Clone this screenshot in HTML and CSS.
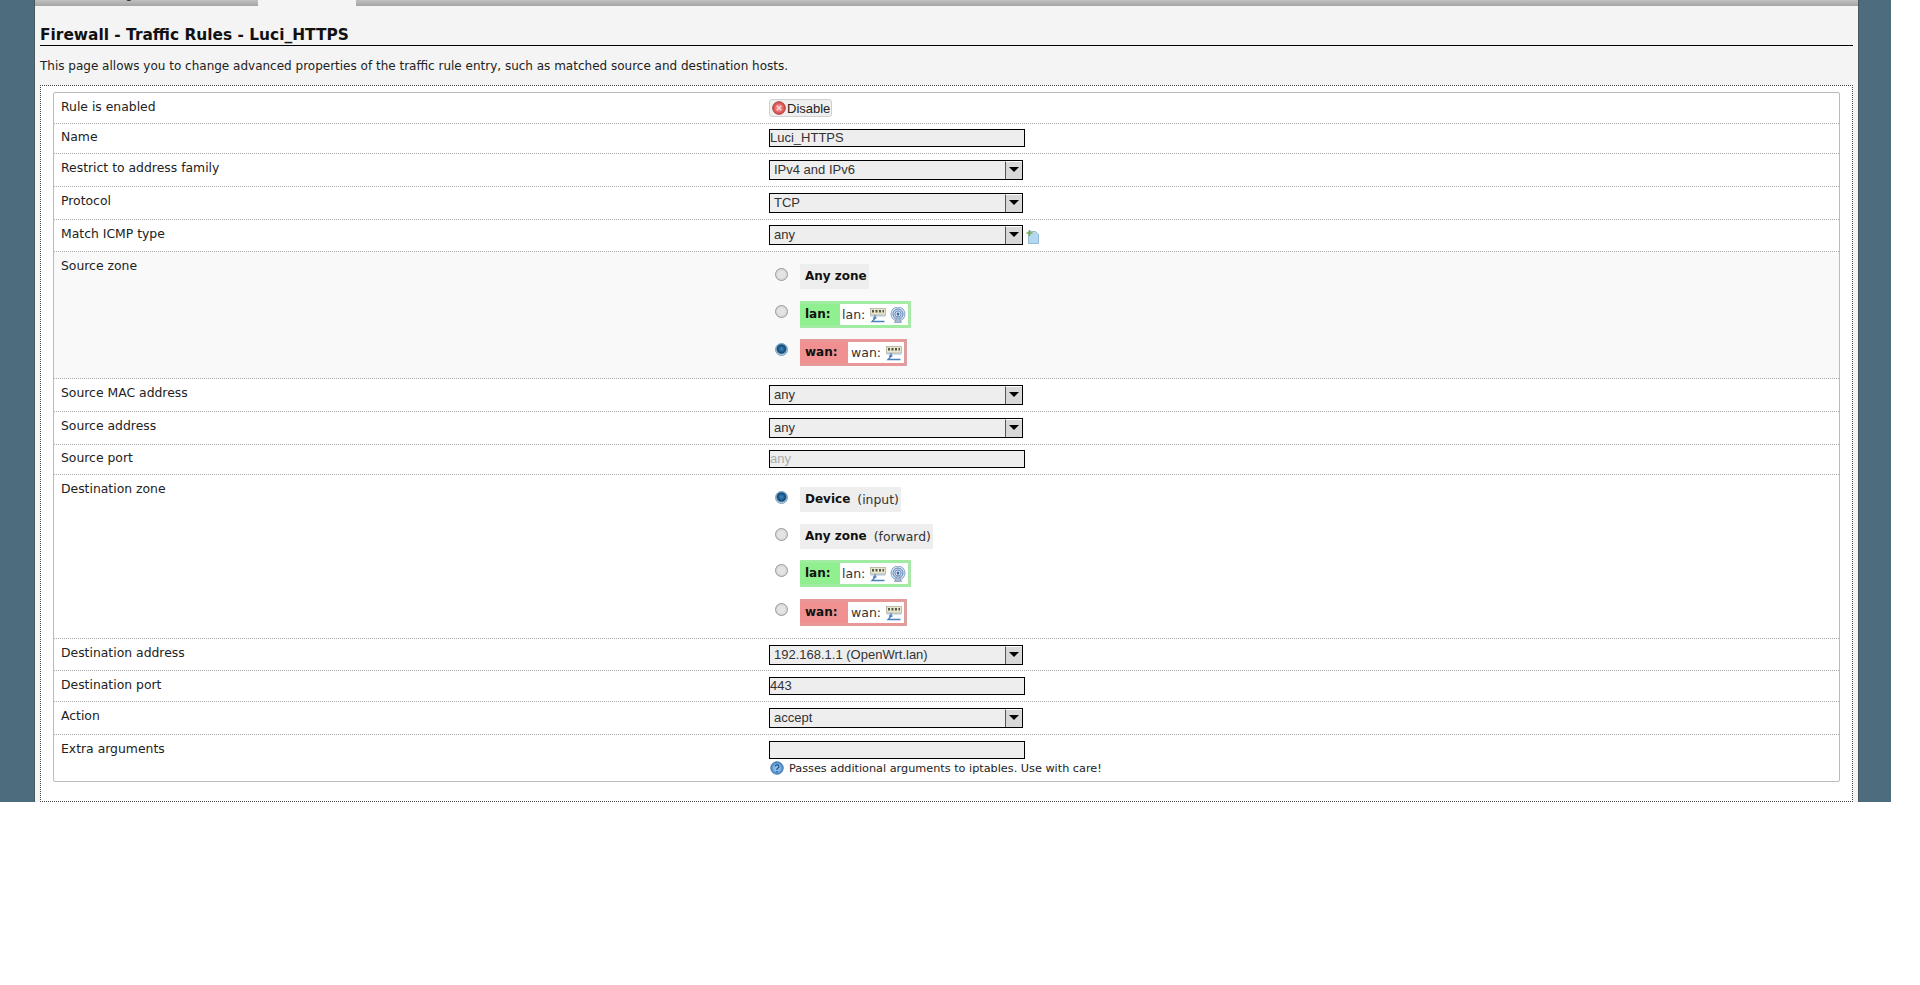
FILE: index.html
```html
<!DOCTYPE html>
<html lang="en">
<head>
<meta charset="utf-8">
<title>Firewall - Traffic Rules - Luci_HTTPS</title>
<link rel="stylesheet" href="styles.css">
</head>
<body>
<svg class="defs" width="0" height="0" aria-hidden="true">
  <defs>
    <symbol id="sw" viewBox="0 0 16 16">
      <rect x="0.5" y="1.500" width="15" height="6.500" fill="#e8e6cc" stroke="#a8a890" stroke-width="0.700"/>
      <path d="M2 3h2v2.500H2zM5.500 3h2v2.500h-2zM9 3h2v2.500H9zM12.500 3h1.500v2.500h-1.500z" fill="#55554a"/>
      <rect x="0.5" y="8" width="15" height="1.600" fill="#bccad8"/>
      <path d="M5 8v3.500L2 14.500h12.500M3 11h3.500" fill="none" stroke="#4a80bc" stroke-width="1.300"/>
    </symbol>
    <symbol id="wl" viewBox="0 0 16 16">
      <circle cx="8" cy="7" r="7" fill="#dce6f2" stroke="#7f9fc8"/>
      <circle cx="8" cy="7" r="5" fill="#c4d4ea" stroke="#5f86bc"/>
      <circle cx="8" cy="7" r="3" fill="#e4ecf6" stroke="#6f90c0"/>
      <circle cx="8" cy="7" r="1.400" fill="#3f68a8"/>
      <path d="M8 8L4.500 15.500h7z" fill="#a8b8d0" stroke="#6f88b0" stroke-width="0.600"/>
    </symbol>
  </defs>
</svg>
<div class="page">
  <div class="panel">
    <div class="tabs">
      <div class="tab tab-off tab-first"><span class="tab-text">General Settings</span></div>
      <div class="tab tab-on"></div>
      <div class="tab tab-off tab-last"></div>
    </div>
    <div class="head">
      <h2 class="title">Firewall - Traffic Rules - Luci_HTTPS</h2>
      <p class="desc">This page allows you to change advanced properties of the traffic rule entry, such as matched source and destination hosts.</p>
    </div>
    <div class="fieldset">
      <div class="box">
        <div class="row">
          <div class="label">Rule is enabled</div>
          <div class="field">
            <div class="btn">
              <svg class="btn-icon" viewBox="0 0 14 14" width="14" height="14"><circle cx="7" cy="7" r="6.300" fill="#e05a5a" stroke="#a83a3a"/><circle cx="7" cy="7" r="3.800" fill="#ec8080"/><path d="M4.800 4.800l4.400 4.400M9.200 4.800l-4.400 4.400" stroke="#f6d8d8" stroke-width="1.300"/></svg>
              <span>Disable</span>
            </div>
          </div>
        </div>
        <div class="row row-name">
          <div class="label">Name</div>
          <div class="field"><div class="input">Luci_HTTPS</div></div>
        </div>
        <div class="row">
          <div class="label">Restrict to address family</div>
          <div class="field"><div class="select"><span class="select-text">IPv4 and IPv6</span><span class="arrow"></span></div></div>
        </div>
        <div class="row">
          <div class="label">Protocol</div>
          <div class="field"><div class="select"><span class="select-text">TCP</span><span class="arrow"></span></div></div>
        </div>
        <div class="row row-name">
          <div class="label label-match">Match ICMP type</div>
          <div class="field field-inline">
            <div class="select"><span class="select-text">any</span><span class="arrow"></span></div>
            <svg class="add-icon" viewBox="0 0 14 14" width="14" height="14"><path d="M2.500 1.500h7l3 3v9h-10z" fill="#b4d8ee" stroke="#7fb0d0" stroke-width="0.800"/><path d="M3.500 0v6M0.500 3h6" stroke="#7fa84a" stroke-width="1.600"/></svg>
          </div>
        </div>
        <div class="row row-zone row-shade">
          <div class="label label-zone">Source zone</div>
          <div class="field zones">
            <div class="zone-line"><span class="radio"></span><div class="zone zone-any"><b>Any zone</b></div></div>
            <div class="zone-line"><span class="radio"></span><div class="zone zone-lan"><b>lan:</b><span class="zone-inner">lan: <svg class="net"><use href="#sw"/></svg><svg class="net net-wl"><use href="#wl"/></svg></span></div></div>
            <div class="zone-line zone-line-close"><span class="radio radio-on"></span><div class="zone zone-wan"><b>wan:</b><span class="zone-inner">wan: <svg class="net"><use href="#sw"/></svg></span></div></div>
          </div>
        </div>
        <div class="row">
          <div class="label">Source MAC address</div>
          <div class="field"><div class="select"><span class="select-text">any</span><span class="arrow"></span></div></div>
        </div>
        <div class="row">
          <div class="label">Source address</div>
          <div class="field"><div class="select"><span class="select-text">any</span><span class="arrow"></span></div></div>
        </div>
        <div class="row row-name">
          <div class="label">Source port</div>
          <div class="field"><div class="input input-placeholder">any</div></div>
        </div>
        <div class="row row-zone">
          <div class="label label-zone">Destination zone</div>
          <div class="field zones">
            <div class="zone-line"><span class="radio radio-on"></span><div class="zone zone-any"><b>Device</b><span class="zone-note">(input)</span></div></div>
            <div class="zone-line"><span class="radio"></span><div class="zone zone-any"><b>Any zone</b><span class="zone-note">(forward)</span></div></div>
            <div class="zone-line zone-line-close"><span class="radio"></span><div class="zone zone-lan"><b>lan:</b><span class="zone-inner">lan: <svg class="net"><use href="#sw"/></svg><svg class="net net-wl"><use href="#wl"/></svg></span></div></div>
            <div class="zone-line"><span class="radio"></span><div class="zone zone-wan"><b>wan:</b><span class="zone-inner">wan: <svg class="net"><use href="#sw"/></svg></span></div></div>
          </div>
        </div>
        <div class="row row-bottom-tight">
          <div class="label">Destination address</div>
          <div class="field"><div class="select"><span class="select-text">192.168.1.1 (OpenWrt.lan)</span><span class="arrow"></span></div></div>
        </div>
        <div class="row">
          <div class="label">Destination port</div>
          <div class="field"><div class="input">443</div></div>
        </div>
        <div class="row">
          <div class="label">Action</div>
          <div class="field"><div class="select"><span class="select-text">accept</span><span class="arrow"></span></div></div>
        </div>
        <div class="row row-last">
          <div class="label">Extra arguments</div>
          <div class="field">
            <div class="input"></div>
            <div class="help">
              <svg class="help-icon" viewBox="0 0 14 14" width="14" height="14"><circle cx="7" cy="7" r="6.200" fill="#5a9ad8" stroke="#3a70a8"/><circle cx="7" cy="7" r="3.800" fill="#8cbce8"/><path d="M5.300 5.600a1.800 1.700 0 1 1 2.500 1.600L7 8v1M7 10v1.200" fill="none" stroke="#24507f" stroke-width="1.200"/></svg>
              <span>Passes additional arguments to iptables. Use with care!</span>
            </div>
          </div>
        </div>
      </div>
    </div>
  </div>
</div>
</body>
</html>
```
FILE: styles.css
```css
* { box-sizing: border-box; }
html, body { margin: 0; padding: 0; background: #fff; overflow: hidden; }
body { height: 985px; font-family: "DejaVu Sans", Verdana, sans-serif; font-size: 12px; color: #1a1a1a; }
.defs { position: absolute; }

.page { width: 1891px; height: 802px; padding: 0 32px 0 34px; background: #4d6d7f; }
.panel { height: 802px; background: #f4f4f4; border-left: 1px solid #46585f; border-right: 1px solid #46585f; display: flex; flex-direction: column; }

.tabs { display: flex; height: 6px; flex: none; }
.tab { height: 6px; overflow: hidden; }
.tab-off { background: linear-gradient(#c0c0c0, #a4a4a4); }
.tab-first { width: 223px; }
.tab-on { width: 98px; background: #f4f4f4; }
.tab-last { flex: 1; }
.tab-text { display: block; margin-top: -13px; padding-left: 4px; line-height: 15px; font-size: 12px; color: #333; white-space: nowrap; }

.head { padding: 0 5px; flex: none; }
.title { margin: 0; height: 40px; padding-top: 20px; line-height: 19px; font-size: 15.400px; font-weight: 700; color: #111; border-bottom: 1px solid #000; font-family: "DejaVu Sans", sans-serif; }
.desc { margin: 0; height: 39px; padding-top: 12px; line-height: 16px; font-size: 12px; color: #222; }

.fieldset { flex: 1; margin: 0 5px; padding: 6px 12px 0; border: 1px dotted #444; background: #fff; }
.box { border: 1px solid #bbb; border-radius: 2px; background: #fff; }

.row { display: flex; padding: 6px 0; border-bottom: 1px dotted #aaa; }
.row-name { padding-top: 5px; }
.row-bottom-tight { padding-bottom: 5px; }
.row-shade { background: #f9f9f9; }
.row-zone { padding: 12px 0; }
.row-last { border-bottom: 0; padding-bottom: 5px; }

.label { width: 715px; flex: none; padding-left: 7px; line-height: 15px; font-size: 12.400px; color: #222; }
.label-zone { margin-top: -6px; }
.label-match { margin-top: 1px; }
.field { flex: 1; }
.field-inline { display: flex; align-items: flex-end; }

.btn { display: flex; align-items: center; height: 18px; width: 63px; padding-left: 2px; border: 1px solid #d0d0d0; border-radius: 3px; background: #efefef; font-family: "Liberation Sans", Arial, sans-serif; font-size: 13px; color: #222; }
.btn-icon { margin-right: 1px; flex: none; }

.input { width: 256px; height: 18px; border: 1px solid #000; background: #eee; font-family: "Liberation Sans", Arial, sans-serif; font-size: 13px; line-height: 15px; color: #333; }
.input-placeholder { color: #aaa; }

.select { display: flex; justify-content: space-between; width: 254px; height: 20px; border: 1px solid #000; background: #eee; font-family: "Liberation Sans", Arial, sans-serif; font-size: 13px; line-height: 17px; color: #333; }
.select-text { padding-left: 4px; white-space: nowrap; }
.arrow { position: relative; width: 17px; height: 18px; flex: none; background: #d8d8d8; border-left: 1px solid #555; border-top: 1px solid #fff; }
.arrow::after { content: ""; position: absolute; left: 3px; top: 5px; border-left: 5px solid transparent; border-right: 5px solid transparent; border-top: 5px solid #000; }

.add-icon { margin: 0 0 1px 3px; flex: none; }

.zones { display: flex; flex-direction: column; gap: 12px; }
.zone-line { display: flex; align-items: flex-start; padding-left: 6px; }
.zone-line-close { margin-top: -1px; }
.radio { flex: none; width: 13px; height: 13px; margin: 4px 12px 0 0; border: 1px solid #999; border-radius: 50%; background: radial-gradient(circle, #e4e4e4 40%, #c8c8c8 100%); }
.radio-on { border-color: #6f9fc0; background: radial-gradient(circle at 50% 45%, #3f8ac0 0, #124a78 50%, #cfe0ec 72%); }

.zone { display: inline-flex; align-items: center; line-height: 15px; color: #111; }
.zone b { font-weight: 700; }
.zone-any { height: 25px; padding: 0 2px 0 5px; background: #eee; }
.zone-note { margin-left: 7px; font-size: 12.400px; color: #333; }
.zone-lan, .zone-wan { height: 27px; padding-left: 5px; }
.zone-lan { background: #90f090; width: 111px; box-shadow: inset -3px 0 0 #a8e8a8, inset 0 3px 0 #a0eca0, inset 0 -3px 0 #a0eca0; }
.zone-wan { background: #f09090; width: 107px; box-shadow: inset -3px 0 0 #dca0a0, inset 0 3px 0 #e89898, inset 0 -3px 0 #e89898; }
.zone-inner { display: flex; align-items: center; height: 21px; margin-left: auto; margin-right: 3px; padding-left: 2px; background: #fff; font-size: 12.500px; color: #333; white-space: pre; }
.zone-lan .zone-inner { width: 68px; }
.zone-wan .zone-inner { width: 56px; padding-left: 3px; }
.net { width: 16px; height: 16px; margin-left: 1px; flex: none; }
.net-wl { margin-left: 4px; }

.help { display: flex; align-items: center; height: 16px; margin-top: 1px; font-size: 11.250px; color: #222; }
.help-icon { margin: 0 5px 0 1px; flex: none; }
```
